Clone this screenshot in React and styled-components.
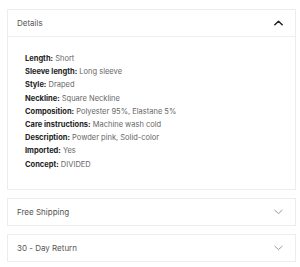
import React, { useState } from "react";
import styled, { createGlobalStyle } from "styled-components";

const GlobalStyle = createGlobalStyle`
  html, body {
    margin: 0;
    padding: 0;
    background: #ffffff;
  }
  body {
    font-family: Inter, "Noto Sans", Arial, sans-serif;
  }
`;

const specs = [
  ["Length", "Short"],
  ["Sleeve length", "Long sleeve"],
  ["Style", "Draped"],
  ["Neckline", "Square Neckline"],
  ["Composition", "Polyester 95%, Elastane 5%"],
  ["Care instructions", "Machine wash cold"],
  ["Description", "Powder pink, Solid-color"],
  ["Imported", "Yes"],
  ["Concept", "DIVIDED"],
];

function Chevron({ up }) {
  return (
    <Icon $up={up} width="9" height="6" viewBox="0 0 9 6" fill="none">
      <path
        d={up ? "M0.8 4.8 L4.5 1.2 L8.2 4.8" : "M0.8 1.2 L4.5 4.6 L8.2 1.2"}
        strokeWidth={up ? 1.5 : 1}
        strokeLinecap="round"
        strokeLinejoin="round"
      />
    </Icon>
  );
}

function Section({ title, defaultOpen, children }) {
  const [open, setOpen] = useState(!!defaultOpen);
  return (
    <Card>
      <Header $open={open} onClick={() => setOpen(!open)}>
        <Title>{title}</Title>
        <Chevron up={open} />
      </Header>
      {open && <Body>{children}</Body>}
    </Card>
  );
}

export default function App() {
  return (
    <>
      <GlobalStyle />
      <Wrapper>
        <Section title="Details" defaultOpen>
          <SpecList>
            {specs.map(([label, value]) => (
              <SpecRow key={label}>
                <Label>{label}:</Label> {value}
              </SpecRow>
            ))}
          </SpecList>
        </Section>
        <Section title="Free Shipping" />
        <Section title="30 - Day Return" />
      </Wrapper>
    </>
  );
}

const Wrapper = styled.div`
  display: flex;
  flex-direction: column;
  gap: 8px;
  padding: 9px 4px 0 7px;
`;

const Card = styled.div`
  border: 1px solid #ededed;
  background: #fff;
`;

const Header = styled.div`
  height: 26px;
  display: flex;
  align-items: center;
  justify-content: space-between;
  padding: 0 12px 0 9px;
  cursor: pointer;
  border-bottom: ${(p) => (p.$open ? "1px solid #efefef" : "none")};
`;

const Title = styled.span`
  font-size: 8px;
  color: #555;
`;

const Icon = styled.svg`
  stroke: ${(p) => (p.$up ? "#222" : "#999")};
  display: block;
`;

const Body = styled.div`
  height: 152px;
  box-sizing: border-box;
  padding: 15px 17px 0;
`;

const SpecList = styled.div`
  display: flex;
  flex-direction: column;
`;

const SpecRow = styled.div`
  font-size: 7.5px;
  line-height: 13.2px;
  color: #666;
`;

const Label = styled.span`
  font-weight: 700;
  color: #222;
`;
